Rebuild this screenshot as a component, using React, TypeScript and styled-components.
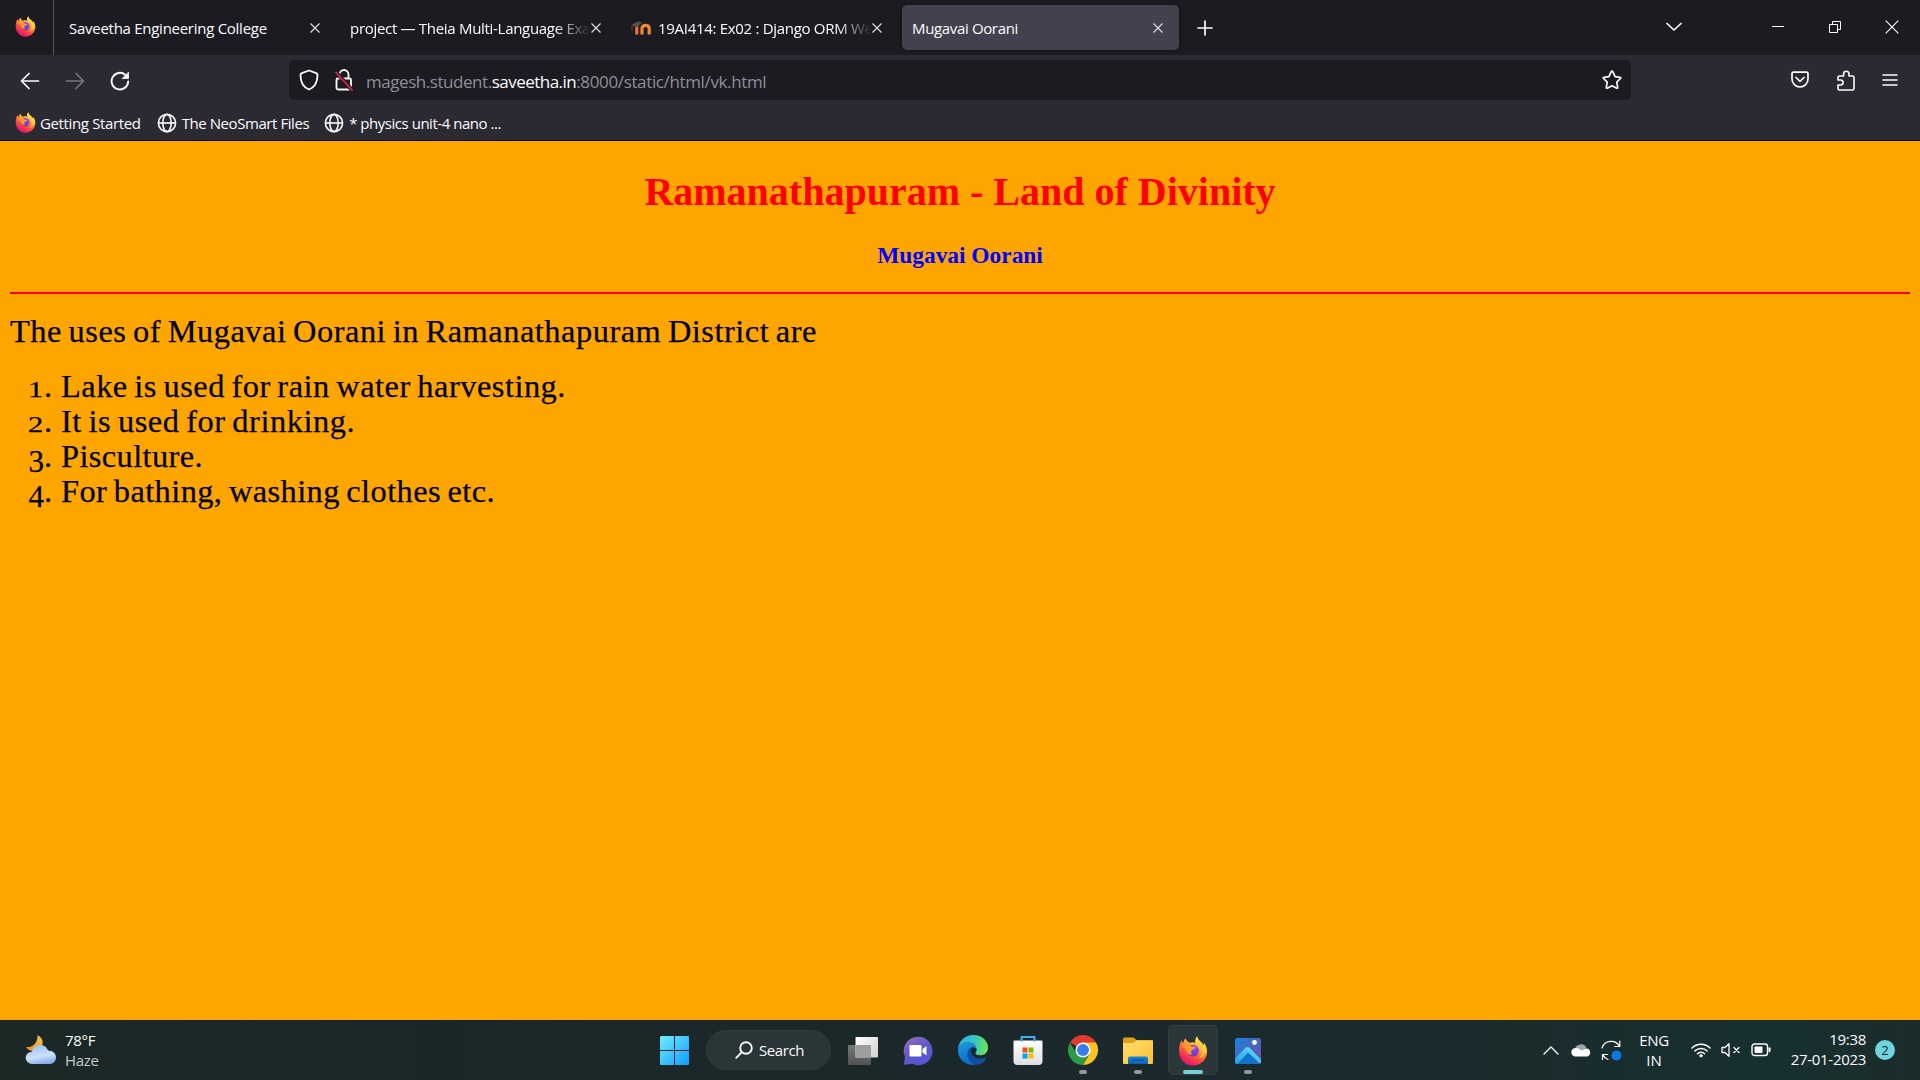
import React from 'react';
import styled, { createGlobalStyle } from 'styled-components';

const ui = '"Open Sans", "Noto Sans", "DejaVu Sans", sans-serif';

const Global = createGlobalStyle`
  *, *::before, *::after { box-sizing: border-box; }
  html, body { margin: 0; padding: 0; background: #ffa500; }
  svg { display: block; flex: none; }
`;

const Screen = styled.div`
  width: 1920px;
  height: 1080px;
  display: flex;
  flex-direction: column;
  overflow: hidden;
  font-family: ${ui};
  color: #fbfbfe;
`;

const Label = styled.span<{ $size?: number; $track?: number; $color?: string }>`
  font-size: ${p => p.$size ?? 15}px;
  letter-spacing: ${p => p.$track ?? 0}px;
  color: ${p => p.$color ?? 'inherit'};
  line-height: 20px;
  white-space: nowrap;
`;

/* ---------- Browser chrome ---------- */

const TabStrip = styled.div`
  height: 55px;
  flex: none;
  display: flex;
  align-items: center;
  background: #1c1b22;
`;

const PinnedTab = styled.div`
  width: 54px;
  height: 55px;
  padding: 16px 0 0 15px;
  border-right: 1px solid #55545b;
`;

const Tab = styled.div<{ $width: number; $pad: number; $active?: boolean }>`
  width: ${p => p.$width}px;
  height: 45px;
  display: flex;
  align-items: center;
  padding: 1px 0 0 ${p => p.$pad}px;
  border-radius: 5px;
  background: ${p => (p.$active ? '#42414d' : 'transparent')};
  box-shadow: ${p => (p.$active ? '0 0 4px rgba(0,0,0,.45)' : 'none')};
`;

const TabTitle = styled.div<{ $width: number; $fade?: boolean }>`
  width: ${p => p.$width}px;
  height: 22px;
  overflow: hidden;
  display: flex;
  align-items: center;
  flex: none;
  mask-image: ${p => (p.$fade ? 'linear-gradient(to left, transparent, #000 36px)' : 'none')};
`;

const Spacer = styled.div<{ $width?: number }>`
  flex: ${p => (p.$width === undefined ? '1' : 'none')};
  width: ${p => p.$width ?? 0}px;
`;

const NavBar = styled.div`
  height: 50px;
  flex: none;
  display: flex;
  align-items: center;
  background: #2b2a33;
`;

const UrlBar = styled.div`
  width: 1342px;
  height: 40px;
  display: flex;
  align-items: center;
  padding: 0 9px 0 10px;
  border-radius: 5px;
  background: #1c1b22;
`;

const UrlText = styled.div`
  display: flex;
  padding-top: 3px;
`;

const Bookmarks = styled.div`
  height: 36px;
  flex: none;
  display: flex;
  align-items: center;
  padding: 1px 0 1px 15px;
  background: #2b2a33;
  border-bottom: 1px solid #0c0c0d;
`;

/* ---------- Page ---------- */

const Page = styled.main`
  height: 879px;
  flex: none;
  padding: 28px 10px 0;
  background: #ffa500;
  color: #000;
  font-family: "Liberation Serif", "Times New Roman", serif;
`;

const Title = styled.h1`
  margin: 0;
  font-size: 40px;
  line-height: 46px;
  text-align: center;
  color: #f00;
`;

const Subtitle = styled.h3`
  margin: 27px 0 0;
  font-size: 23.4px;
  line-height: 27px;
  text-align: center;
  color: #00f;
`;

const Rule = styled.hr`
  margin: 23px 0 0;
  height: 2px;
  border: 0;
  background: #f00;
`;

const Intro = styled.p`
  margin: 20px 0 20px;
  font-size: 32.4px;
  line-height: 35px;
  letter-spacing: 0.52px;
  word-spacing: -2px;
  -webkit-text-stroke: 0.25px #000;
  white-space: nowrap;
`;

const UseList = styled.ol`
  margin: 0;
  padding: 0;
  list-style: none;
`;

const UseItem = styled.li`
  height: 35px;
  display: flex;
  font-size: 32.4px;
  line-height: 35px;
  -webkit-text-stroke: 0.25px #000;
  white-space: nowrap;
`;

const Marker = styled.span`
  width: 42px;
  margin-right: 9px;
  display: flex;
  align-items: baseline;
  justify-content: flex-end;
`;

const Numeral = styled.span<{ $short: boolean }>`
  font-size: ${p => (p.$short ? 23 : 31)}px;
  transform: ${p => (p.$short ? 'scaleX(1.35)' : 'translateY(5px)')};
  transform-origin: right bottom;
`;

const ItemText = styled.span<{ $track: number }>`
  letter-spacing: ${p => p.$track}px;
  word-spacing: -2px;
`;

/* ---------- Taskbar ---------- */

const Taskbar = styled.footer`
  height: 60px;
  flex: none;
  display: flex;
  align-items: center;
  background: linear-gradient(90deg, #1b2826 0%, #1b2728 35%, #1b292d 60%, #1b2c2d 80%, #17302f 93%, #1b2c2b 100%);
`;

const Weather = styled.div`
  width: 659px;
  display: flex;
  align-items: center;
  padding-left: 25px;
`;

const Lines = styled.div<{ $align: string; $width: number; $lift?: number }>`
  width: ${p => p.$width}px;
  display: flex;
  flex-direction: column;
  align-items: ${p => p.$align};
  padding-bottom: ${p => p.$lift ?? 1}px;
`;

const SearchPill = styled.div`
  width: 125px;
  height: 40px;
  margin: 0 7px 0 10px;
  display: flex;
  align-items: center;
  padding-left: 28px;
  gap: 6px;
  border-radius: 20px;
  background: #2a3537;
  border: 1px solid #303b3d;
`;

const TaskButton = styled.div<{ $active?: boolean }>`
  width: 50px;
  height: 50px;
  margin-right: 5px;
  flex: none;
  display: flex;
  flex-direction: column;
  align-items: center;
  justify-content: flex-end;
  gap: 4px;
  border-radius: 5px;
  background: ${p => (p.$active ? '#2b3639' : 'transparent')};
  border: 1px solid ${p => (p.$active ? '#323d40' : 'transparent')};
`;

const Indicator = styled.span<{ $kind: 'none' | 'open' | 'active' }>`
  width: ${p => (p.$kind === 'active' ? 20 : 8)}px;
  height: 4px;
  border-radius: 2px;
  background: ${p => (p.$kind === 'none' ? 'transparent' : p.$kind === 'open' ? '#91989a' : '#74d1da')};
`;

const Tray = styled.div`
  flex: 1;
  display: flex;
  align-items: center;
`;

const Badge = styled.span`
  width: 20px;
  height: 20px;
  margin-left: 9px;
  display: grid;
  place-items: center;
  border-radius: 50%;
  background: #70d3dd;
  color: #10262a;
  font-size: 13px;
  line-height: 20px;
`;

/* ---------- Icons ---------- */

const Firefox = ({ size, id }: { size: number; id: string }) => (
  <svg width={size} height={size} viewBox="0 0 32 32">
    <defs>
      <linearGradient id={id + 'a'} x1=".8" y1="0" x2=".25" y2="1">
        <stop offset=".08" stopColor="#fff44f" />
        <stop offset=".35" stopColor="#ffb52e" />
        <stop offset=".6" stopColor="#ff5a37" />
        <stop offset=".85" stopColor="#f2205e" />
        <stop offset="1" stopColor="#d81a86" />
      </linearGradient>
      <linearGradient id={id + 'b'} x1=".6" y1="0" x2=".3" y2="1">
        <stop offset="0" stopColor="#a04bf5" />
        <stop offset="1" stopColor="#5b37c9" />
      </linearGradient>
    </defs>
    <path fill={`url(#${id}a)`} d="M20.400 0c-1.500 2-2.600 4.500-2 7.300-2-.9-3.800-.9-5.400 0C10.500 6.500 8.800 5 8.300 2.700 6.500 4 5.700 6 5.600 7.700 4.600 7 4 6 3.700 4.500 1.500 8.500.7 13 1.200 17.500 2 25.500 8.500 31.500 16.200 31.500 24.500 31.500 31 24.600 31 16.500c0-3.300-1.100-6.500-3.300-9l-.3 3C26 6 21 5.500 20.400 0z" />
    <circle cx="16" cy="15.500" r="6.300" fill={`url(#${id}b)`} />
    <path fill="#ff982d" d="M4.200 11C8 8.600 12.200 9 14.200 11.300c1.600.4 3.300.2 4.800.8-.4 1.700-2.800 2.400-4.600 3.500-1 .7-.5 3.200 1.400 4.300-4.800.2-7.500-2.400-7.200-6-1.300-.9-2.800-1.300-4.400-2.900z" />
    <path fill="#ffd43c" opacity=".8" d="M20.400 0c.4 5.500 4 7 5.200 12 1.400 5.500-.5 9.500-4.100 12.300 5.500-1.700 8.500-6 8-11-.3-2.300-1-4-1.800-6l-.3 3C26 6 21 5.500 20.400 0z" />
  </svg>
);

const Close = () => (
  <svg width="10" height="10" viewBox="0 0 10 10" stroke="#dcdce2" strokeWidth="1.150">
    <path d="M.5.5l9 9M9.500.5l-9 9" />
  </svg>
);

const Globe = () => (
  <svg width="20" height="20" viewBox="0 0 20 20" fill="none" stroke="#fbfbfe" strokeWidth="1.600">
    <circle cx="10" cy="10" r="8.600" />
    <ellipse cx="10" cy="10" rx="4.200" ry="8.600" />
    <path d="M1.400 10h17.200" />
  </svg>
);

const Moodle = () => (
  <svg width="20" height="20" viewBox="0 0 20 20" fill="none">
    <path d="M5.800 16.500V8.500" stroke="#e8752a" strokeWidth="3.200" />
    <path d="M11 16.500v-6c0-4.300 7.200-4.300 7.200 0v6" stroke="#ef8a2c" strokeWidth="3.200" />
    <path d="M1 6.500L7 3.500l4 .8L7.500 8l-5 .5z" fill="#57504d" />
    <path d="M1 7.500v6" stroke="#5e3622" strokeWidth="1.200" />
  </svg>
);

const line = { fill: 'none', stroke: '#fbfbfe', strokeLinecap: 'round' as const, strokeLinejoin: 'round' as const };

const Start = () => (
  <svg width="30" height="30" viewBox="0 0 30 30">
    <defs>
      <linearGradient id="win" x1="0" y1="0" x2="30" y2="30" gradientUnits="userSpaceOnUse">
        <stop stopColor="#75f0ff" /><stop offset="1" stopColor="#0c9cfc" />
      </linearGradient>
    </defs>
    <path fill="url(#win)" d="M2 1h13v14H1V2zM16 1h13q1 0 1 1v13H16zM1 16h14v14H2q-1 0-1-1zM16 16h14v13q0 1-1 1H16z" />
  </svg>
);

const TaskView = () => (
  <svg width="32" height="30" viewBox="0 0 32 30">
    <defs>
      <linearGradient id="tv" x1="0" y1="0" x2="1" y2="1"><stop stopColor="#fff" /><stop offset="1" stopColor="#cfcfcf" /></linearGradient>
      <linearGradient id="tw" x1="0" y1="0" x2="0" y2="1"><stop stopColor="#777" /><stop offset="1" stopColor="#505253" /></linearGradient>
    </defs>
    <rect x="1" y="9" width="23" height="20" rx="1" fill="url(#tw)" />
    <rect x="8.500" y="1" width="22.500" height="20.500" rx="1" fill="url(#tv)" />
    <path fill="#9d9d9d" d="M8.500 9H24v12.500H8.500z" />
  </svg>
);

const Chat = () => (
  <svg width="30" height="30" viewBox="0 0 30 30">
    <defs><linearGradient id="ch" x1="0" y1="0" x2=".7" y2="1"><stop stopColor="#9b6fb8" /><stop offset=".6" stopColor="#5a57c8" /><stop offset="1" stopColor="#5558d8" /></linearGradient></defs>
    <path fill="url(#ch)" d="M15 .8a14.200 14.200 0 1 1-5.800 27L.8 28.800l1.300-7.600A14.200 14.200 0 0 1 15 .8z" />
    <rect x="6.500" y="9" width="12" height="11.500" rx="1.200" fill="#fff" />
    <path fill="#fff" d="M19.500 13l4-3v9.500l-4-3z" />
  </svg>
);

const Edge = () => (
  <svg width="32" height="32" viewBox="0 0 32 32">
    <defs>
      <linearGradient id="e1" x1="0" y1=".3" x2="1" y2=".4"><stop stopColor="#2bb3e8" /><stop offset=".55" stopColor="#35c5c0" /><stop offset="1" stopColor="#6ee653" /></linearGradient>
      <linearGradient id="e2" x1="0" y1="0" x2=".4" y2="1"><stop stopColor="#1c9be0" /><stop offset="1" stopColor="#0b6cc9" /></linearGradient>
    </defs>
    <path fill="url(#e1)" d="M1 15C1.800 7 8 1 16.500 1 25 1 31 7 31 13.500c0 5-3.600 7.800-7.600 7.800-3 0-5-.9-5-2 0-.8 1.200-1.500 1.200-3.500C19.600 11 15 8.500 10.500 8.500 6 8.500 2.500 11 1 15z" />
    <path fill="url(#e2)" d="M1 15c1.500-4 5-6.500 9.500-6.500 4.700 0 9 2.600 9.100 7.200-1.200-2-3.300-2.500-4.600-2.300-4.400.6-5 6.600-1.500 10.600 1.800 2.200 4 3.300 6.500 3.500L18 31C8.500 32 .2 24.500 1 15z" />
    <path fill="#0f4f9e" d="M12.500 14.500c-4.500 5-1.500 14 5.500 16.500 5 0 9-2.500 11.500-6.700.3-.6-.2-1.100-.9-.8-5.500 2.300-13.100.7-14.400-5-.3-1.400-.1-3 1-4.800-1 0-2 .2-2.700.8z" />
  </svg>
);

const Store = () => (
  <svg width="30" height="31" viewBox="0 0 30 31">
    <path d="M8.500 7V2h13v5" fill="none" stroke="#35b3f0" strokeWidth="2" strokeLinejoin="round" />
    <defs><linearGradient id="st" x1="0" y1="0" x2="0" y2="1"><stop stopColor="#fff" /><stop offset="1" stopColor="#dedede" /></linearGradient></defs>
    <path fill="url(#st)" d="M.5 6.500Q.5 5.500 1.500 5.500h27q1 0 1 1V26q0 4-4 4h-21q-4 0-4-4z" />
    <path stroke="#2b9fe0" strokeWidth="2" d="M8.500 4v2.500M21.500 4v2.500" />
    <path fill="#f25022" d="M9.500 12.500h5v5h-5z" /><path fill="#7fba00" d="M15.500 12.500h5v5h-5z" />
    <path fill="#00a4ef" d="M9.500 18.500h5v5h-5z" /><path fill="#ffb900" d="M15.500 18.500h5v5h-5z" />
  </svg>
);

const Chrome = () => (
  <svg width="32" height="32" viewBox="0 0 32 32">
    <path fill="#e23b2e" d="M16 16L3 8.500a15 15 0 0 1 26 0z" />
    <path fill="#fcc31e" d="M16 8.500h13A15 15 0 0 1 16 31l6.500-11.200z" />
    <path fill="#2a9b48" d="M3 8.500L9.500 19.800 16 23.500l5.500-1.800L16 31A15 15 0 0 1 3 8.500z" />
    <circle cx="16" cy="16" r="7.600" fill="#fff" /><circle cx="16" cy="16" r="6" fill="#3a7cec" />
  </svg>
);

const Folder = () => (
  <svg width="32" height="30" viewBox="0 0 32 30">
    <defs>
      <linearGradient id="fo" x1="0" y1="0" x2="1" y2="1"><stop stopColor="#ffdf70" /><stop offset="1" stopColor="#fcc030" /></linearGradient>
      <linearGradient id="fb" x1="0" y1="0" x2="0" y2="1"><stop stopColor="#1687dc" /><stop offset="1" stopColor="#0c62b4" /></linearGradient>
    </defs>
    <path fill="#dfa013" d="M1 3q0-1.500 1.500-1.500h9L14.500 4H30q1 0 1 1v5H1z" />
    <path fill="url(#fo)" d="M1 7h10l3.500-2.500H30q1 0 1 1V27q0 1-1 1H2q-1 0-1-1z" />
    <path fill="url(#fb)" d="M6 28v-5.500Q6 20.500 8 20.500h16q2 0 2 2V28z" />
    <path stroke="#0b4c8a" strokeWidth="1.200" d="M10 24h12" />
  </svg>
);

const Photos = () => (
  <svg width="28" height="29" viewBox="0 0 28 29">
    <defs>
      <linearGradient id="p1" x1="0" y1="0" x2="1" y2="1"><stop stopColor="#1684e0" /><stop offset=".5" stopColor="#4964bd" /><stop offset="1" stopColor="#7a4ca8" /></linearGradient>
      <linearGradient id="p2" x1=".8" y1="0" x2="0" y2="1"><stop stopColor="#62e0f7" /><stop offset="1" stopColor="#1aa0e6" /></linearGradient>
    </defs>
    <rect x="1" y="1" width="26" height="26" rx="2.500" fill="url(#p1)" />
    <path fill="#1272cb" d="M3 27L14 14l11 13z" />
    <path fill="url(#p2)" d="M1 21.500L11.500 10.800q2-1.800 4 0L27 22.500V25l-1 1.500L14 15.500 3.500 27Q1 27 1 24.500z" />
    <circle cx="20.500" cy="5.500" r="2.400" fill="#fff" />
  </svg>
);

const CloudMoon = () => (
  <svg width="32" height="31" viewBox="0 0 32 31">
    <defs>
      <linearGradient id="mo" x1="1" y1="0" x2="0" y2="1"><stop stopColor="#f8c744" /><stop offset="1" stopColor="#f08b20" /></linearGradient>
      <linearGradient id="cl" x1=".3" y1="0" x2=".6" y2="1"><stop stopColor="#9fc2f5" /><stop offset=".6" stopColor="#cddff9" /><stop offset="1" stopColor="#82aaea" /></linearGradient>
    </defs>
    <path fill="url(#mo)" d="M12.500 0c6.500 3 7.500 12-.5 15.500-4.500 1.500-9 0-11-3.500 7 1 12-4.500 11.500-12z" />
    <path fill="url(#cl)" d="M7 29a6 6 0 0 1-.2-12.300c1-4.200 4.200-6.700 8.200-6.700 4 0 6.800 2.200 8 5.500 5 .1 8 3.200 8 6.900S28 29 24.500 29z" />
  </svg>
);

const tasks: { icon: React.ReactNode; kind: 'none' | 'open' | 'active' }[] = [
  { icon: <TaskView />, kind: 'none' },
  { icon: <Chat />, kind: 'none' },
  { icon: <Edge />, kind: 'none' },
  { icon: <Store />, kind: 'none' },
  { icon: <Chrome />, kind: 'open' },
  { icon: <Folder />, kind: 'open' },
  { icon: <Firefox size={30} id="ft" />, kind: 'active' },
  { icon: <Photos />, kind: 'open' },
];

const uses = [
  { text: 'Lake is used for rain water harvesting.', track: 0.5 },
  { text: 'It is used for drinking.', track: 0.56 },
  { text: 'Pisculture.', track: 0.4 },
  { text: 'For bathing, washing clothes etc.', track: 0.42 },
];

export default function App() {
  return (
    <Screen>
      <Global />
      <TabStrip>
        <PinnedTab><Firefox size={21} id="fp" /></PinnedTab>
        <Tab $width={281} $pad={15}>
          <TabTitle $width={241}><Label $track={-0.27}>Saveetha Engineering College</Label></TabTitle>
          <Close />
        </Tab>
        <Tab $width={281} $pad={15}>
          <TabTitle $width={241} $fade><Label $track={-0.3}>project — Theia Multi-Language Example</Label></TabTitle>
          <Close />
        </Tab>
        <Tab $width={286} $pad={15}>
          <Moodle />
          <Spacer $width={7} />
          <TabTitle $width={214} $fade><Label $track={-0.3}>19AI414: Ex02 : Django ORM Web App</Label></TabTitle>
          <Close />
        </Tab>
        <Tab $width={277} $pad={10} $active>
          <TabTitle $width={241}><Label $track={-0.35}>Mugavai Oorani</Label></TabTitle>
          <Close />
        </Tab>
        <Spacer $width={18} />
        <svg width="16" height="16" viewBox="0 0 16 16" {...line} strokeWidth="1.700"><path d="M8 1v14M1 8h14" /></svg>
        <Spacer />
        <svg width="16" height="12" viewBox="0 0 16 12" {...line} strokeWidth="1.700"><path d="M1 1.500l7 6.500 7-6.500" /></svg>
        <Spacer $width={90} />
        <svg width="12" height="12" viewBox="0 0 12 12" stroke="#fff"><path d="M0 4.500h12" /></svg>
        <Spacer $width={45} />
        <svg width="12" height="13" viewBox="0 0 12 13" fill="none" stroke="#fff"><path d="M.5 3.500h8v8h-8zM3.500 3V.5h8v8H9" /></svg>
        <Spacer $width={44} />
        <svg width="14" height="15" viewBox="0 0 14 15" stroke="#fff" strokeWidth="1.100"><path d="M.7.7l12.600 12.600M13.300.7L.7 13.300" /></svg>
        <Spacer $width={21} />
      </TabStrip>

      <NavBar>
        <Spacer $width={20} />
        <svg width="20" height="20" viewBox="0 -2 20 20" {...line} strokeWidth="1.700"><path d="M18.500 9H1.500M9 1.500L1.500 9 9 16.500" /></svg>
        <Spacer $width={25} />
        <svg width="20" height="20" viewBox="0 -2 20 20" {...line} stroke="#77767d" strokeWidth="1.700"><path d="M1.500 9h17M11 1.500L18.500 9 11 16.500" /></svg>
        <Spacer $width={25} />
        <svg width="20" height="22" viewBox="0 -2 20 22" {...line} strokeWidth="1.900"><path d="M18.200 10.500A8.300 8.300 0 1 1 15.500 4" /><path d="M18.500 1.500v6h-6z" fill="#fbfbfe" strokeWidth=".8" /></svg>
        <Spacer $width={159} />
        <UrlBar>
          <svg width="20" height="22" viewBox="0 0 20 22" {...line} strokeWidth="1.800"><path d="M10 1.500l7.200 2.700q1.300.5 1.300 2C18.500 13 16 18 10 20.500 4 18 1.500 13 1.500 6.200q0-1.500 1.300-2z" /></svg>
          <Spacer $width={15} />
          <svg width="20" height="22" viewBox="0 0 20 22" {...line} strokeWidth="1.800">
            <path d="M5.500 9V5.500a4.500 4.500 0 0 1 9 0V9M3.500 9.500h12q1.500 0 1.500 1.500v8q0 1.500-1.500 1.500h-11Q2.500 20.500 2.500 19v-8q0-1.500 1-1.500z" />
            <path d="M2 3l16 18" stroke="#1c1b22" strokeWidth="4" /><path d="M2 3.500L18 21" stroke="#e9204f" strokeWidth="1.800" />
          </svg>
          <Spacer $width={12} />
          <UrlText>
            <Label $size={17} $track={-0.45} $color="#8f8e96">magesh.student.</Label>
            <Label $size={17} $track={-0.52} $color="#fbfbfe">saveetha.in</Label>
            <Label $size={17} $track={-0.36} $color="#8f8e96">:8000/static/html/vk.html</Label>
          </UrlText>
          <Spacer />
          <svg width="20" height="20" viewBox="0 0 20 20" {...line} strokeWidth="1.700"><path d="M10 1.200q.6 0 .9.700l2.200 4.700 5 .7q1.100.3.400 1.200l-3.700 3.700.9 5.200q.1 1.100-1 .8L10 15.800l-4.700 2.400q-1.100.3-1-.8l.9-5.200L1.500 8.500q-.7-.9.4-1.200l5-.7 2.200-4.700q.3-.7.9-.7z" /></svg>
        </UrlBar>
        <Spacer $width={160} />
        <svg width="18" height="18" viewBox="0 0 18 18" {...line} strokeWidth="1.700"><path d="M2.500 1.200h13q1.500 0 1.500 1.500V8a8 8 0 0 1-16 0V2.700q0-1.500 1.500-1.500zM5 6.500l4 3.800 4-3.800" /></svg>
        <Spacer $width={28} />
        <svg width="18" height="21" viewBox="0 0 18 21" {...line} strokeWidth="1.600"><path d="M2.500 20h13q1.500 0 1.500-1.500v-11Q17 6 15.500 6H12V4a2.700 2.700 0 0 0-5.400 0v2H2.500Q1 6 1 7.500V10h2.500a2.500 2.500 0 0 1 0 5H1v3.500Q1 20 2.500 20z" /></svg>
        <Spacer $width={27} />
        <svg width="16" height="14" viewBox="0 0 16 14" {...line} strokeWidth="1.500"><path d="M1 2h14M1 7h14M1 12h14" /></svg>
      </NavBar>

      <Bookmarks>
        <Firefox size={21} id="fbk" />
        <Spacer $width={4} />
        <Label $track={-0.36}>Getting Started</Label>
        <Spacer $width={16} />
        <Globe />
        <Spacer $width={5} />
        <Label $track={-0.43}>The NeoSmart Files</Label>
        <Spacer $width={15} />
        <Globe />
        <Spacer $width={5} />
        <Label $track={-0.47}>* physics unit-4 nano ...</Label>
      </Bookmarks>

      <Page>
        <Title>Ramanathapuram - Land of Divinity</Title>
        <Subtitle>Mugavai Oorani</Subtitle>
        <Rule />
        <Intro>The uses of Mugavai Oorani in Ramanathapuram District are</Intro>
        <UseList>
          {uses.map((u, i) => (
            <UseItem key={u.text}>
              <Marker><Numeral $short={i < 2}>{i + 1}</Numeral>.</Marker>
              <ItemText $track={u.track}>{u.text}</ItemText>
            </UseItem>
          ))}
        </UseList>
      </Page>

      <Taskbar>
        <Weather>
          <CloudMoon />
          <Spacer $width={8} />
          <Lines $align="flex-start" $width={80}>
            <Label $track={-0.3}>78°F</Label>
            <Label $track={-0.3} $color="#c5c9c9">Haze</Label>
          </Lines>
        </Weather>
        <Start />
        <Spacer $width={7} />
        <SearchPill>
          <svg width="18" height="18" viewBox="0 0 18 18" {...line} strokeWidth="1.900"><circle cx="11" cy="7" r="5.800" /><path d="M6.800 11.200L1.200 16.800" /></svg>
          <Label $track={-0.4}>Search</Label>
        </SearchPill>
        {tasks.map((t, i) => (
          <TaskButton key={i} $active={t.kind === 'active'}>
            {t.icon}
            <Indicator $kind={t.kind} />
          </TaskButton>
        ))}
        <Tray>
          <Spacer />
          <svg width="16" height="9" viewBox="0 0 16 9" {...line} strokeWidth="1.300"><path d="M1 8l7-7 7 7" /></svg>
          <Spacer $width={12} />
          <svg width="20" height="14" viewBox="0 0 20 14"><path fill="#9ea6a6" d="M4 7.500A6 6 0 0 1 15.500 5L10 10z" /><path fill="#fff" d="M4.500 13.500a4.200 4.200 0 0 1 0-8.400c2.500-.3 4 .8 6 2.400l5-1.900a4 4 0 0 1 .5 7.900z" /></svg>
          <Spacer $width={10} />
          <svg width="21" height="21" viewBox="0 0 21 21" {...line} strokeWidth="1.200"><path d="M1 8a9.500 9.500 0 0 1 17.500-1.500M18.800 1v5.500h-5M7 19.500A9 9 0 0 1 2 15M1.500 19.500V14.500h5" /><circle cx="15.500" cy="15.500" r="5" fill="#0a7ae0" stroke="none" /></svg>
          <Spacer $width={10} />
          <Lines $align="center" $width={44}>
            <Label $track={-0.3}>ENG</Label><Label>IN</Label>
          </Lines>
          <Spacer $width={15} />
          <svg width="20" height="16" viewBox="0 0 20 16" {...line} strokeWidth="1.500"><path d="M1 6a12.500 12.500 0 0 1 18 0M3.800 9a8.700 8.700 0 0 1 12.400 0M6.500 11.800a5 5 0 0 1 7 0" /><circle cx="10" cy="13.800" r="1.300" fill="#fff" strokeWidth=".6" /></svg>
          <Spacer $width={10} />
          <svg width="20" height="16" viewBox="0 0 20 16" {...line} strokeWidth="1.300"><path d="M1 5.500h3L8 1.700v12.600L4 10.500H1zM13 5.500l5 5M18 5.500l-5 5" /></svg>
          <Spacer $width={10} />
          <svg width="20" height="14" viewBox="0 0 20 14" {...line} strokeWidth="1.400"><rect x="1" y="1" width="15.500" height="11.500" rx="2.500" /><rect x="3.500" y="3.500" width="8" height="6.500" rx=".8" fill="#fff" stroke="none" /><path d="M18.500 5.200v3" strokeWidth="2" /></svg>
          <Spacer $width={14} />
          <Lines $align="flex-end" $width={81} $lift={3}>
            <Label $track={-0.3}>19:38</Label><Label $track={-0.3}>27-01-2023</Label>
          </Lines>
          <Badge>2</Badge>
          <Spacer $width={25} />
        </Tray>
      </Taskbar>
    </Screen>
  );
}
